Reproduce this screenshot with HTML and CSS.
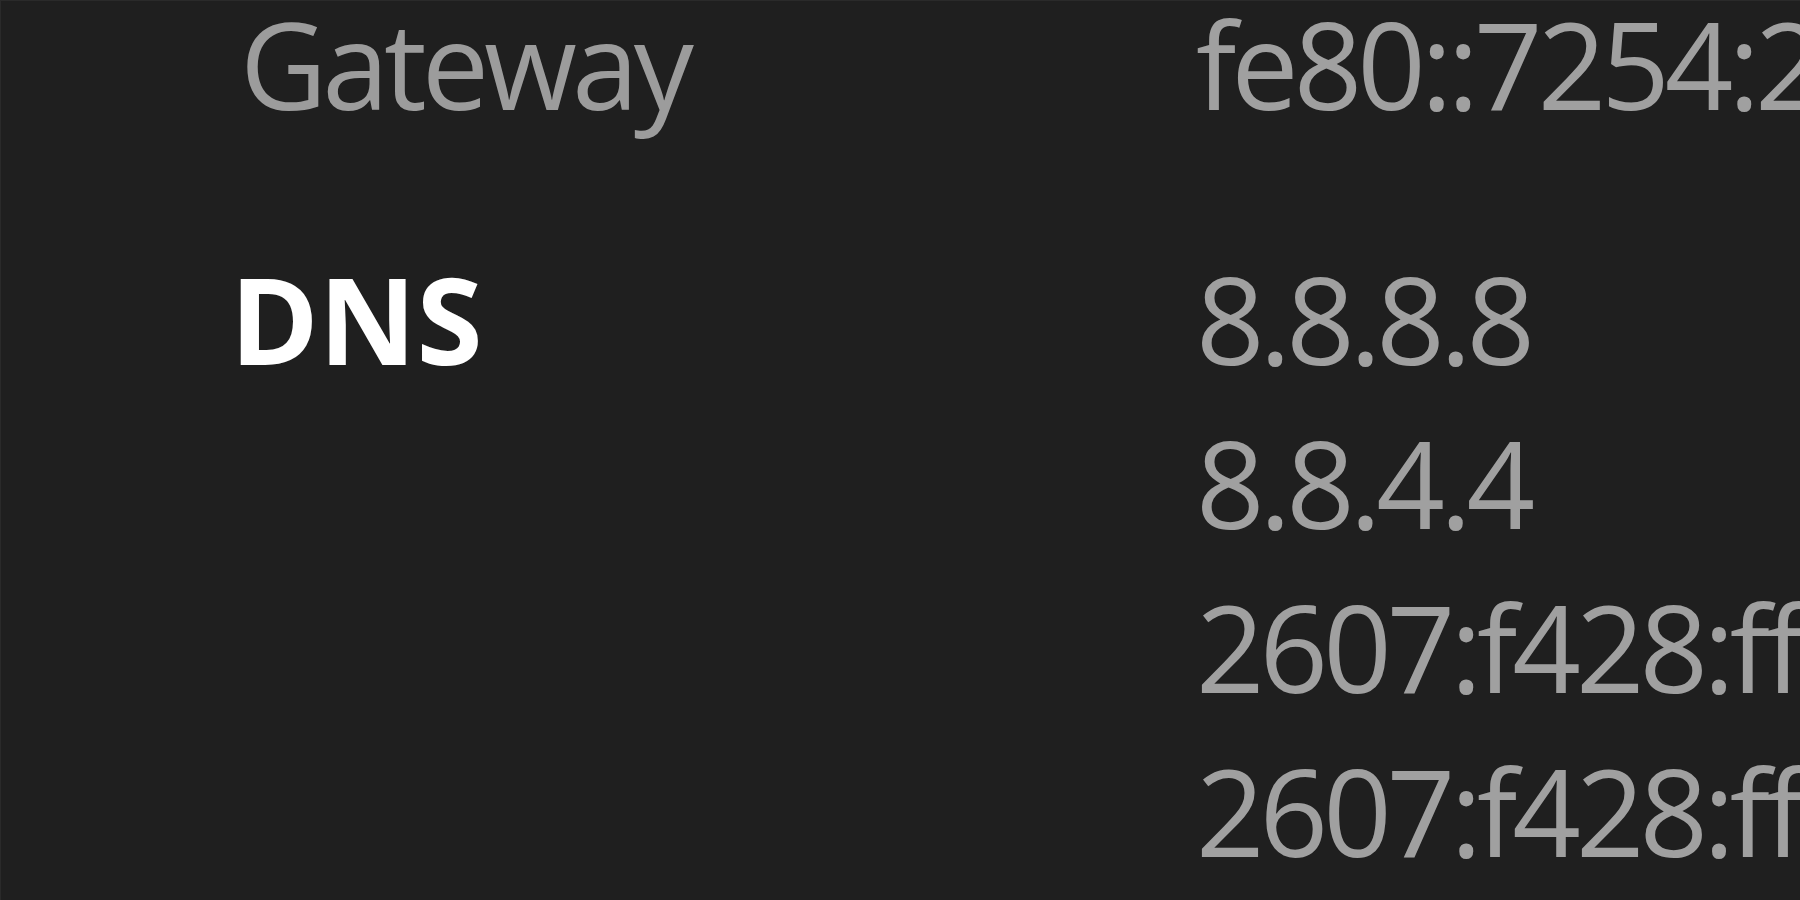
FILE: index.html
```html
<!DOCTYPE html>
<html lang="en">
<head>
  <meta charset="UTF-8" />
  <title>Network properties</title>
  <link rel="stylesheet" href="styles.css">
</head>
<body>

<div class="props">
  <div class="row first">
    <div class="label">Gateway</div>
    <div class="values">
      <div>fe80::7254:2ff:fe3c:1a9b%12</div>
    </div>
  </div>

  <div class="row">
    <div class="label strong">DNS</div>
    <div class="values">
      <div>8.8.8.8</div>
      <div>8.8.4.4</div>
      <div>2607:f428:ffff:ffff::1</div>
      <div>2607:f428:ffff:ffff::2</div>
    </div>
  </div>
</div>

</body>
</html>
```

FILE: styles.css
```css
* {
  box-sizing: border-box;
}

html, body {
  height: 100%;
}

body {
  margin: 0;
  background: #1f1f1f;
  font-family: 'Open Sans', 'Noto Sans', sans-serif;
  overflow: hidden;
  border-top: 1px solid #2a2a2a;
  border-left: 1px solid #2a2a2a;
}

.props {
  padding-left: 239px;
  display: flex;
  flex-direction: column;
  gap: 110px;
}

.row {
  display: grid;
  grid-template-columns: 956px 1fr;
  font-size: 120px;
  line-height: 164px;
  letter-spacing: -5px;
  white-space: nowrap;
}

.row.first {
  line-height: 126px;
}

.label {
  color: #9c9c9c;
}

.label.strong {
  color: #fff;
  font-weight: 700;
  letter-spacing: 0;
  margin-left: -10px;
}

.values {
  color: #a0a0a0;
}
```
